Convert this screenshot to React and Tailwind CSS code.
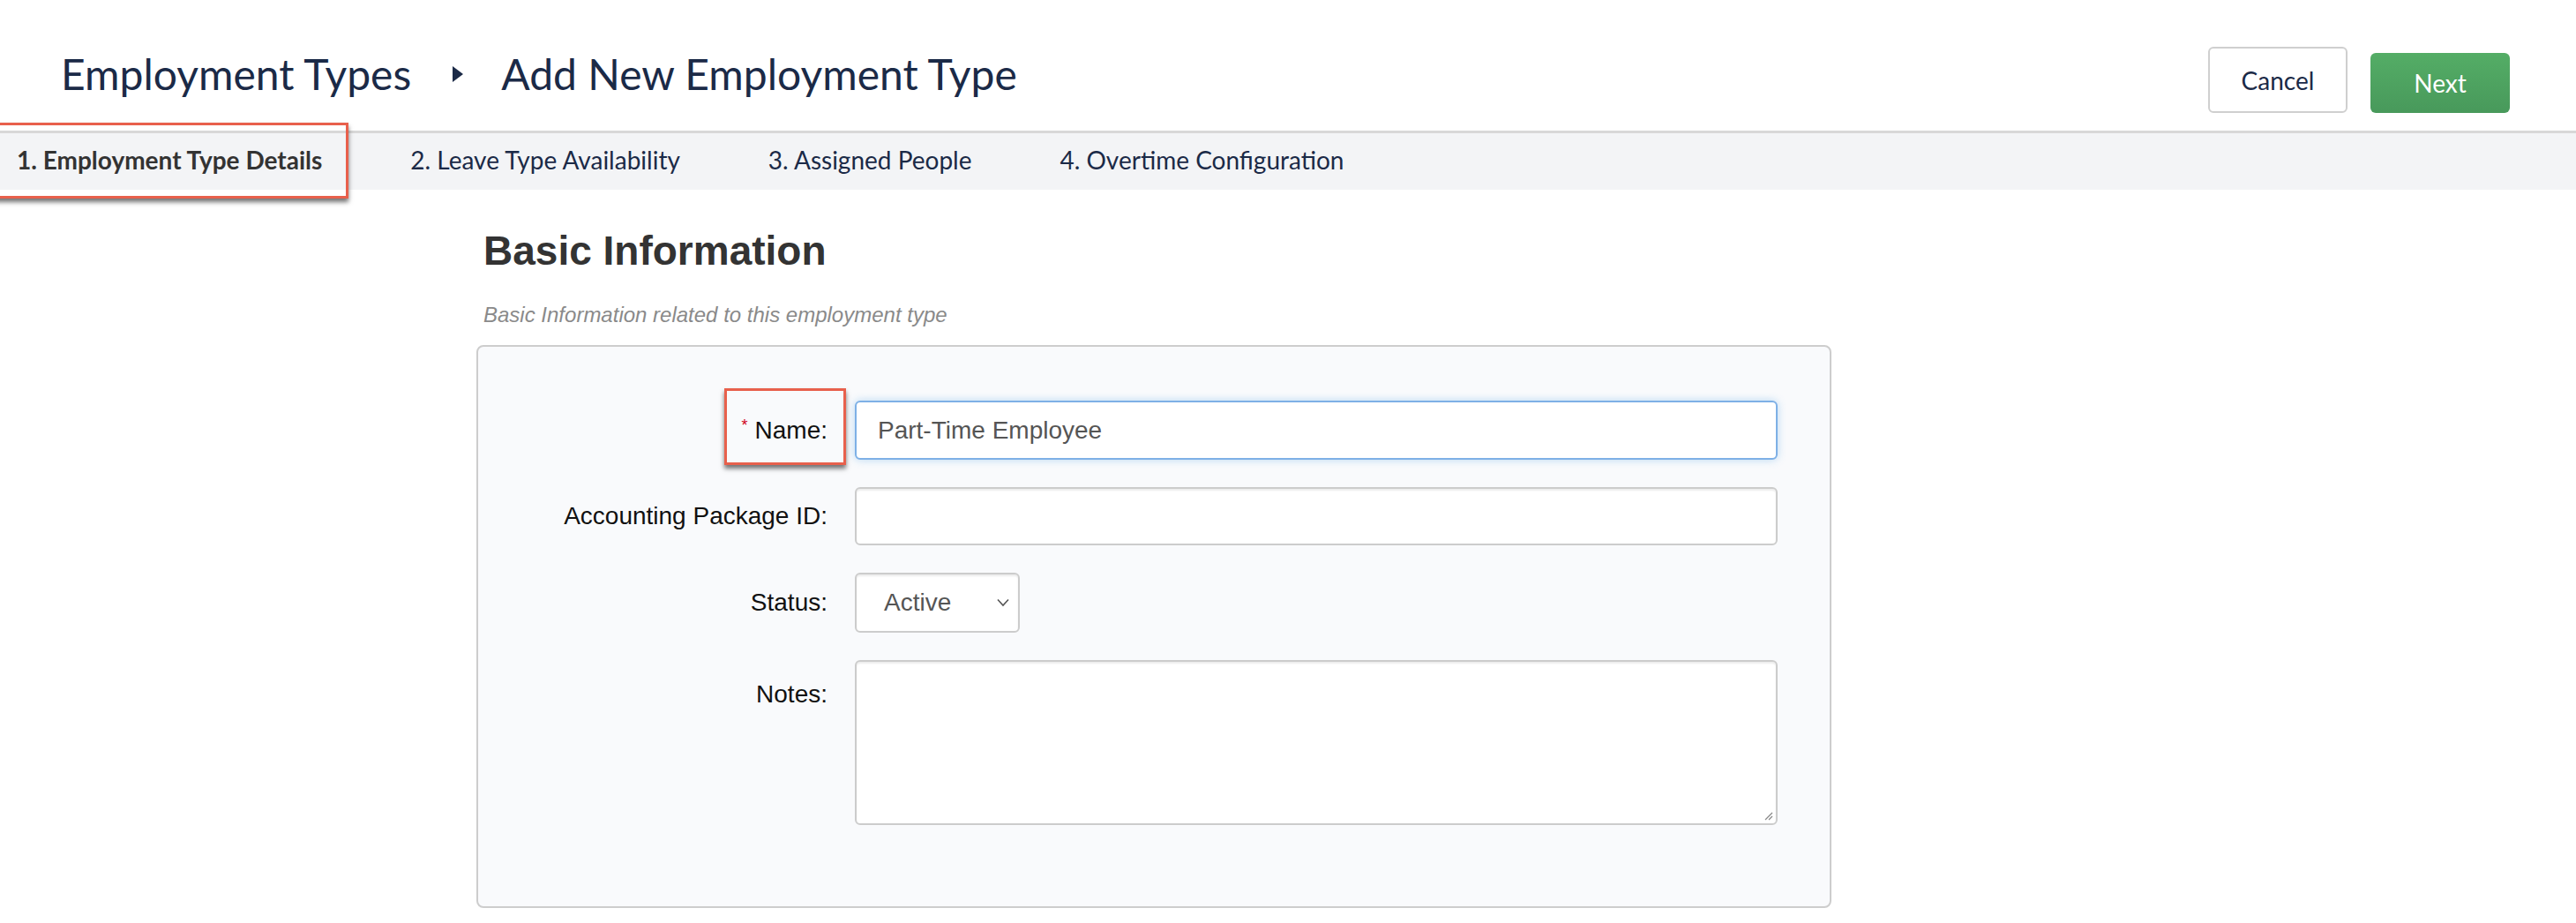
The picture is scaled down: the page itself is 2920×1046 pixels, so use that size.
import React from 'react';

const tabs = [
    '1. Employment Type Details',
    '2. Leave Type Availability',
    '3. Assigned People',
    '4. Overtime Configuration',
];

const App = () => {
    return (
        <div className="min-h-screen bg-white">
            {/* Header */}
            <div className="flex items-end justify-between h-[148px] pb-[20px] pl-[69px] pr-[75px]">
                <h1 className="flex items-center mb-[20px] text-[48px] text-[#1b2a47] font-['Lato',sans-serif] leading-none">
                    <span>Employment Types</span>
                    <svg className="ml-[46px] mr-[42px]" width="14" height="20" viewBox="0 0 14 20">
                        <path d="M1 1 L13 10 L1 19 Z" fill="#1b2a47" />
                    </svg>
                    <span>Add New Employment Type</span>
                </h1>
                <div className="flex items-end gap-[26px] font-['Lato',sans-serif] text-[28px]">
                    <button className="w-[158px] h-[75px] border-2 border-[#cfcfcf] rounded-[6px] bg-white text-[#1b2a47]">
                        Cancel
                    </button>
                    <button className="w-[158px] h-[68px] rounded-[6px] bg-gradient-to-b from-[#54ad66] to-[#48995b] text-white">
                        Next
                    </button>
                </div>
            </div>

            {/* Steps */}
            <div className="flex items-center h-[67px] pb-[5px] border-t-[3px] border-[#d8d8d8] bg-[#f3f4f6] font-['Lato',sans-serif] text-[28px] text-[#1b2a47]">
                {tabs.map((tab, i) => (
                    <div key={tab} className={i === 0 ? 'relative pl-[19px] pr-[100px] font-bold text-[#333]' : 'pr-[100px]'}>
                        {tab}
                        {i === 0 && (
                            <span className="absolute -left-[15px] right-[70px] -top-[21px] -bottom-[23px] border-[3px] border-[#e8604c] shadow-[0_4px_5px_rgba(0,0,0,0.55)]" />
                        )}
                    </div>
                ))}
            </div>

            {/* Content */}
            <div className="pl-[540px] font-['Liberation_Sans',Arial,sans-serif]">
                <h2 className="pl-[8px] pt-[46px] text-[46px] font-bold text-[#333] leading-none">Basic Information</h2>
                <p className="pl-[8px] mt-[38px] text-[24px] italic text-[#8a8a8a] leading-none">
                    Basic Information related to this employment type
                </p>

                <div className="mt-[22px] w-[1536px] h-[638px] border-2 border-[#cdcdcd] rounded-[8px] bg-[#f9fafc] pt-[61px]">
                    <div className="grid grid-cols-[396px_1046px] gap-x-[31px] gap-y-[31px] text-[28px] text-[#111]">
                        {/* Name */}
                        <div className="flex items-center justify-end h-[67px]">
                            <span className="relative">
                                <span className="relative top-[2px] text-[#d0021b] text-[18px] align-top mr-[8px]">*</span>
                                Name:
                                <span className="absolute -left-[20px] -right-[21px] -top-[27px] -bottom-[18px] border-[3px] border-[#e8604c] shadow-[0_4px_5px_rgba(0,0,0,0.55)]" />
                            </span>
                        </div>
                        <input
                            type="text"
                            defaultValue="Part-Time Employee"
                            className="h-[67px] px-[24px] bg-white border-2 border-[#7eb0e6] rounded-[6px] shadow-[0_0_10px_rgba(102,175,233,0.45)] text-[28px] text-[#555] outline-none"
                        />

                        {/* Accounting Package ID */}
                        <div className="flex items-center justify-end h-[66px]">Accounting Package ID:</div>
                        <input
                            type="text"
                            className="h-[66px] px-[24px] bg-white border-2 border-[#cccccc] rounded-[6px] shadow-[inset_0_2px_2px_rgba(0,0,0,0.08)] outline-none"
                        />

                        {/* Status */}
                        <div className="flex items-center justify-end h-[68px]">Status:</div>
                        <div>
                            <div className="relative w-[187px] h-[68px] bg-white border-2 border-[#cccccc] rounded-[6px] shadow-[inset_0_2px_2px_rgba(0,0,0,0.08)] flex items-center pl-[31px] text-[#555]">
                                Active
                                <svg className="absolute right-[10px] top-[27px]" width="14" height="10" viewBox="0 0 14 10" fill="none">
                                    <path d="M1 1.5 L7 8 L13 1.5" stroke="#555" strokeWidth="1.6" />
                                </svg>
                            </div>
                        </div>

                        {/* Notes */}
                        <div className="flex justify-end pt-[18px]">Notes:</div>
                        <div className="relative h-[187px] bg-white border-2 border-[#cccccc] rounded-[6px] shadow-[inset_0_2px_2px_rgba(0,0,0,0.08)]">
                            <svg className="absolute right-[3px] bottom-[3px]" width="12" height="12" viewBox="0 0 12 12">
                                <path d="M11 3 L3 11 M11 7 L7 11" stroke="#888" strokeWidth="1.2" />
                            </svg>
                        </div>
                    </div>
                </div>
            </div>
        </div>
    );
};

export default App;
